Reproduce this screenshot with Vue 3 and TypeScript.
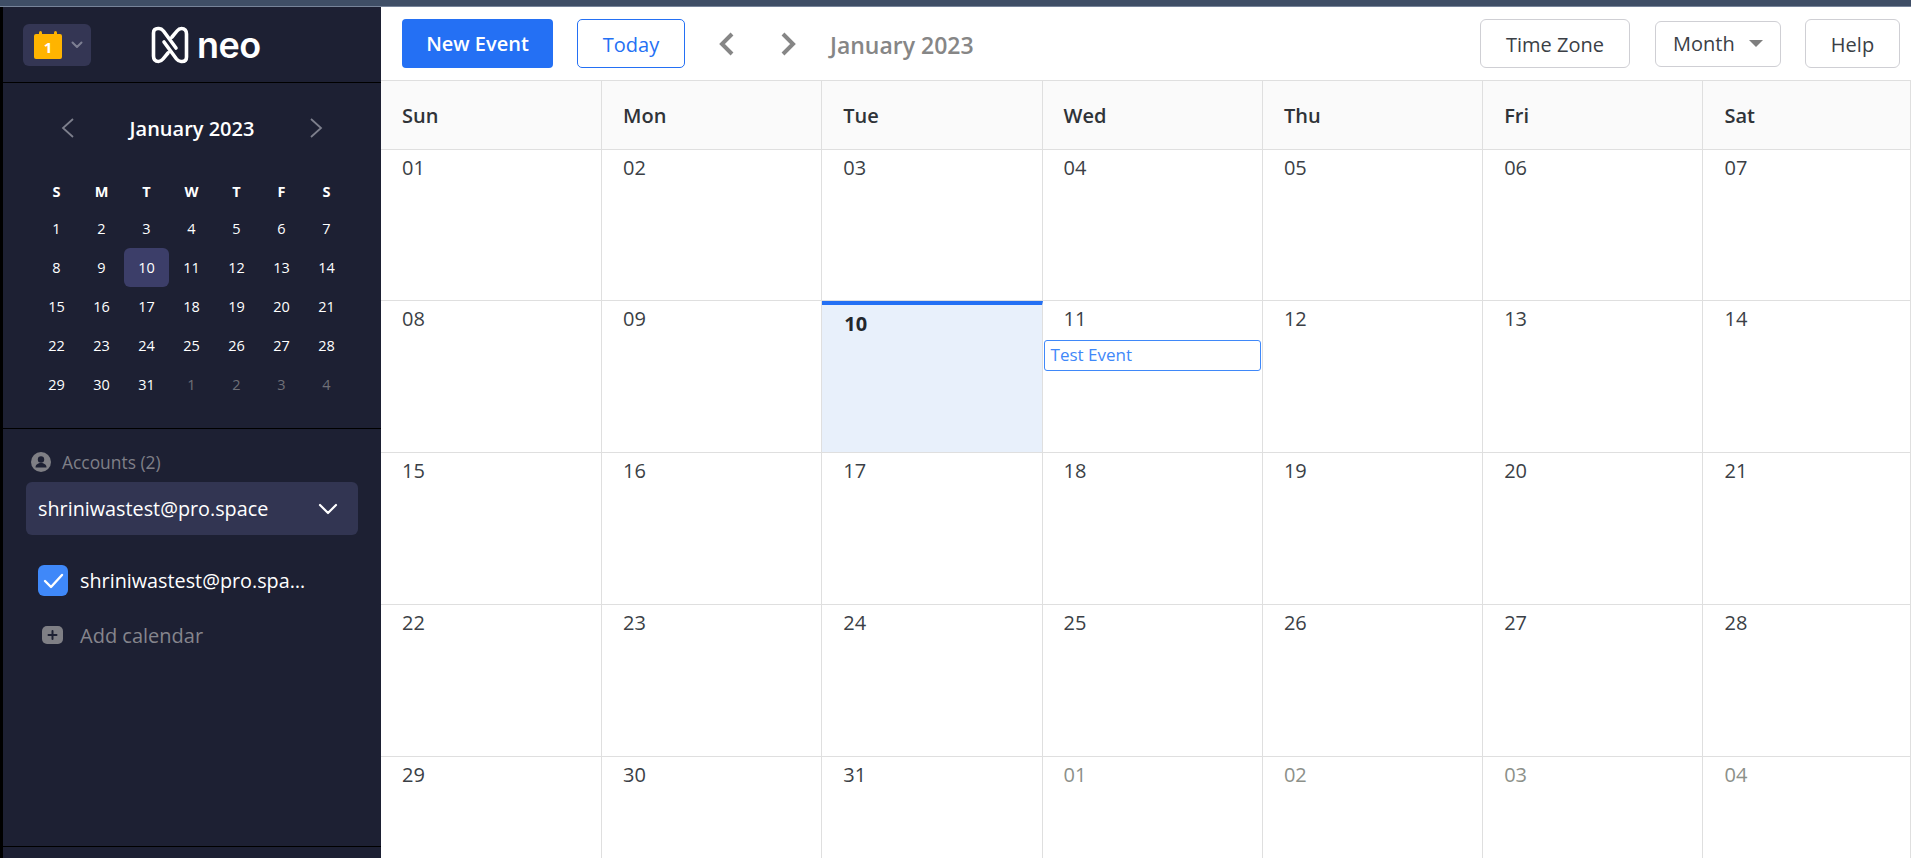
<script setup lang="ts">
const miniHead: string[] = ['S', 'M', 'T', 'W', 'T', 'F', 'S']
interface MiniDay { n: number; muted?: boolean; today?: boolean }
const miniDays: MiniDay[] = []
for (let i = 1; i <= 31; i++) miniDays.push({ n: i, today: i === 10 })
for (let i = 1; i <= 4; i++) miniDays.push({ n: i, muted: true })

const weekDays: string[] = ['Sun', 'Mon', 'Tue', 'Wed', 'Thu', 'Fri', 'Sat']
interface Cell { label: string; muted?: boolean; today?: boolean; event?: string }
const cells: Cell[] = []
for (let i = 1; i <= 31; i++) {
  const label = String(i).padStart(2, '0')
  cells.push({ label, today: i === 10, event: i === 11 ? 'Test Event' : undefined })
}
for (let i = 1; i <= 4; i++) cells.push({ label: '0' + i, muted: true })
</script>

<template>
  <div class="app">
    <div class="strip"></div>
    <div class="body">
      <aside class="side">
        <div class="brand">
          <button class="calbtn">
            <svg width="28" height="28" viewBox="0 0 28 28">
              <rect x="0" y="3" width="28" height="25" rx="2" fill="#ffb400" />
              <rect x="5" y="0" width="3" height="6" rx="1.5" fill="#ffb400" />
              <rect x="20" y="0" width="3" height="6" rx="1.5" fill="#ffb400" />
              <text x="14" y="22" text-anchor="middle" class="calnum">1</text>
            </svg>
            <svg class="calchev" width="12" height="8" viewBox="0 0 12 8">
              <path d="M1.5 1.5 6 6l4.5-4.5" fill="none" stroke="#7d7f93" stroke-width="2" stroke-linecap="round" stroke-linejoin="round" />
            </svg>
          </button>
          <div class="logo">
            <svg width="38" height="38" viewBox="0 0 38 38">
              <path d="M25 22 12.500 5Q10.500 2.500 8 2.500H7Q2.500 2.500 2.500 7V30Q2.500 35.500 7.500 35.500 10 35.500 12 33L17 27M13 16 25.500 33Q27.500 35.500 30 35.500H31Q35.500 35.500 35.500 31V8Q35.500 2.500 30.500 2.500 28 2.500 26 5L21 11" fill="none" stroke="#fff" stroke-width="3.600" stroke-linecap="round" stroke-linejoin="round" />
            </svg>
            <span class="neo">neo</span>
          </div>
        </div>

        <div class="mini">
          <div class="mini-title">
            <svg width="14" height="22" viewBox="0 0 14 22"><path d="M12 2 2 11l10 9" fill="none" stroke="#7d7f8c" stroke-width="1.800" /></svg>
            <span>January 2023</span>
            <svg width="14" height="22" viewBox="0 0 14 22"><path d="m2 2 10 9-10 9" fill="none" stroke="#7d7f8c" stroke-width="1.800" /></svg>
          </div>
          <div class="mini-grid">
            <span v-for="(d, i) in miniHead" :key="i" class="mini-head">{{ d }}</span>
            <span v-for="(d, i) in miniDays" :key="'d' + i" class="mini-day" :class="{ muted: d.muted, today: d.today }">{{ d.n }}</span>
          </div>
        </div>

        <div class="accounts">
          <div class="acc-label">
            <svg width="20" height="20" viewBox="0 0 20 20">
              <circle cx="10" cy="10" r="10" fill="#7f7f85" />
              <circle cx="10" cy="7.500" r="3.200" fill="#1d2033" />
              <path d="M4.500 15.500c0-3 2.500-4.500 5.500-4.500s5.500 1.500 5.500 4.500z" fill="#1d2033" />
            </svg>
            <span>Accounts (2)</span>
          </div>
          <div class="select">
            <span>shriniwastest@pro.space</span>
            <svg width="20" height="12" viewBox="0 0 20 12"><path d="m2 2 8 8 8-8" fill="none" stroke="#fff" stroke-width="2.200" stroke-linecap="round" stroke-linejoin="round" /></svg>
          </div>
          <div class="cal-row">
            <span class="check">
              <svg width="22" height="18" viewBox="0 0 22 18"><path d="m3 9 6 6L20 3" fill="none" stroke="#fff" stroke-width="2.400" stroke-linecap="round" stroke-linejoin="round" /></svg>
            </span>
            <span class="cal-name">shriniwastest@pro.space</span>
          </div>
          <div class="add-row">
            <span class="add-ic">
              <svg width="21" height="18" viewBox="0 0 21 18">
                <rect width="21" height="18" rx="5" fill="#7f7f85" />
                <path d="M10.500 5v8M6.500 9h8" stroke="#1d2033" stroke-width="2" stroke-linecap="round" />
              </svg>
            </span>
            <span>Add calendar</span>
          </div>
        </div>
        <div class="side-foot"></div>
      </aside>

      <main class="main">
        <div class="toolbar">
          <button class="btn primary">New Event</button>
          <button class="btn outline">Today</button>
          <svg class="nav first" width="16" height="24" viewBox="0 0 16 24"><path d="M13 2 3 12l10 10" fill="none" stroke="#868686" stroke-width="4" /></svg>
          <svg class="nav" width="16" height="24" viewBox="0 0 16 24"><path d="m3 2 10 10L3 22" fill="none" stroke="#868686" stroke-width="4" /></svg>
          <span class="range">January 2023</span>
          <div class="spacer"></div>
          <button class="btn plain tz">Time Zone</button>
          <button class="btn plain month"><span>Month</span><i class="caret"></i></button>
          <button class="btn plain help">Help</button>
        </div>
        <div class="cal">
          <div v-for="w in weekDays" :key="w" class="head">{{ w }}</div>
          <div v-for="(c, i) in cells" :key="i" class="cell" :class="{ today: c.today }">
            <div class="date" :class="{ muted: c.muted }">{{ c.label }}</div>
            <div v-if="c.event" class="event">{{ c.event }}</div>
          </div>
        </div>
      </main>
    </div>
  </div>
</template>

<style>
html, body { margin: 0; padding: 0; background: #fff; overflow: hidden; }
</style>

<style scoped>
.app { width: 1911px; height: 858px; display: flex; flex-direction: column; overflow: hidden; font-family: "Open Sans", "Noto Sans", sans-serif; }
.strip { height: 7px; flex: none; background: #3f4e66; border-bottom: 1px solid #77849a; box-sizing: border-box; }
.body { flex: 1; display: flex; min-height: 0; }
.side { width: 381px; flex: none; box-sizing: border-box; border-left: 3px solid #000; background: #1d2033; color: #fff; display: flex; flex-direction: column; }
.brand { height: 76px; flex: none; box-sizing: border-box; border-bottom: 1px solid #000; display: flex; align-items: center; padding-left: 20px; }
.calbtn { width: 68px; height: 42px; border: 0; border-radius: 6px; background: #343654; padding: 0 0 0 11px; display: flex; align-items: center; gap: 9px; }
.calnum { font: 700 15px "Open Sans", sans-serif; fill: #fff; }
.logo { margin-left: 60px; display: flex; align-items: center; gap: 8px; }
.neo { font: 600 36px/38px "Inter", sans-serif; color: #fff; letter-spacing: -0.5px; }
.mini { height: 346px; flex: none; box-sizing: border-box; border-bottom: 1px solid #000; padding: 33px 0 0 31px; }
.mini-title { width: 262px; margin-left: 27px; display: flex; align-items: center; justify-content: space-between; font-size: 20px; font-weight: 600; height: 24px; }
.mini-grid { display: grid; grid-template-columns: repeat(7, 45px); grid-template-rows: 35px repeat(5, 39px); margin-top: 34px; }
.mini-head, .mini-day { display: flex; align-items: center; justify-content: center; font-size: 14.500px; }
.mini-head { font-weight: 700; }
.mini-day.muted { color: #6f7078; }
.mini-day.today { background: #3c3e69; border-radius: 6px; }
.accounts { flex: 1; padding: 23px 23px 0 23px; }
.acc-label { display: flex; align-items: center; gap: 11px; margin-left: 5px; color: #7f7f87; font-size: 17.400px; height: 20px; }
.select { margin-top: 10px; height: 53px; box-sizing: border-box; background: #323552; border-radius: 6px; display: flex; align-items: center; justify-content: space-between; padding: 0 20px 0 12px; font-size: 19.800px; }
.cal-row { display: flex; align-items: center; gap: 12px; margin: 30px 0 0 12px; height: 31px; width: 268px; font-size: 19.800px; }
.check { width: 30px; height: 31px; flex: none; background: #3f88f9; border-radius: 6px; display: flex; align-items: center; justify-content: center; }
.cal-name { overflow: hidden; white-space: nowrap; text-overflow: ellipsis; }
.add-row { display: flex; align-items: center; margin: 27px 0 0 16px; height: 24px; color: #85858d; font-size: 20px; gap: 17px; }
.add-ic { display: flex; }
.side-foot { height: 11px; flex: none; border-top: 1px solid #000; }
.main { flex: 1; min-width: 0; display: flex; flex-direction: column; }
.toolbar { height: 73px; flex: none; box-sizing: border-box; display: flex; align-items: center; padding: 0 11px 0 21px; }
.btn { height: 49px; box-sizing: border-box; border-radius: 4px; font-family: inherit; font-size: 20px; background: #fff; padding: 0; }
.primary { width: 151px; border: 0; background: #2470f4; color: #fff; font-weight: 600; }
.outline { width: 108px; margin-left: 24px; border: 1px solid #2470f4; border-radius: 5px; color: #2470f4; padding-top: 2px; }
.nav { margin-left: 45px; }
.nav.first { margin-left: 34px; }
.range { margin-left: 34px; padding-top: 2px; font-size: 23px; font-weight: 600; color: #868686; }
.spacer { flex: 1; }
.plain { border: 1px solid #cfcfd4; border-radius: 6px; color: #3b3f46; }
.tz { width: 150px; padding-top: 2px; }
.month { width: 126px; height: 46px; margin-left: 25px; display: flex; align-items: center; padding: 0 17px; justify-content: space-between; }
.caret { width: 0; height: 0; border-left: 7px solid transparent; border-right: 7px solid transparent; border-top: 7px solid #7f7f7f; }
.help { width: 95px; margin-left: 24px; padding-top: 2px; }
.cal { flex: 1; min-height: 0; display: grid; grid-template-columns: 221px repeat(5, 220.300px) 1fr; grid-template-rows: 69px 151px repeat(4, 152px); overflow: hidden; border-top: 1px solid #dfdfdf; }
.head, .cell { box-sizing: border-box; border-right: 1px solid #dfdfdf; border-bottom: 1px solid #dfdfdf; }
.head { display: flex; align-items: center; padding-left: 21px; background: #fafafa; font-size: 20px; font-weight: 600; color: #2f3338; }
.cell { padding: 6px 1px 0; }
.date { padding-left: 20px; font-size: 20px; line-height: 24px; color: #3b3f46; }
.date.muted { color: #8c9089; }
.cell.today { background: #e8f0fb; border-top: 4px solid #2470f4; padding-top: 7px; }
.cell.today .date { padding-left: 21px; font-weight: 700; color: #23272c; }
.event { margin-top: 9px; height: 31px; box-sizing: border-box; border: 1px solid #3f88f9; border-radius: 3px; color: #3f88f9; font-size: 17px; line-height: 27px; padding-left: 6px; }
</style>
